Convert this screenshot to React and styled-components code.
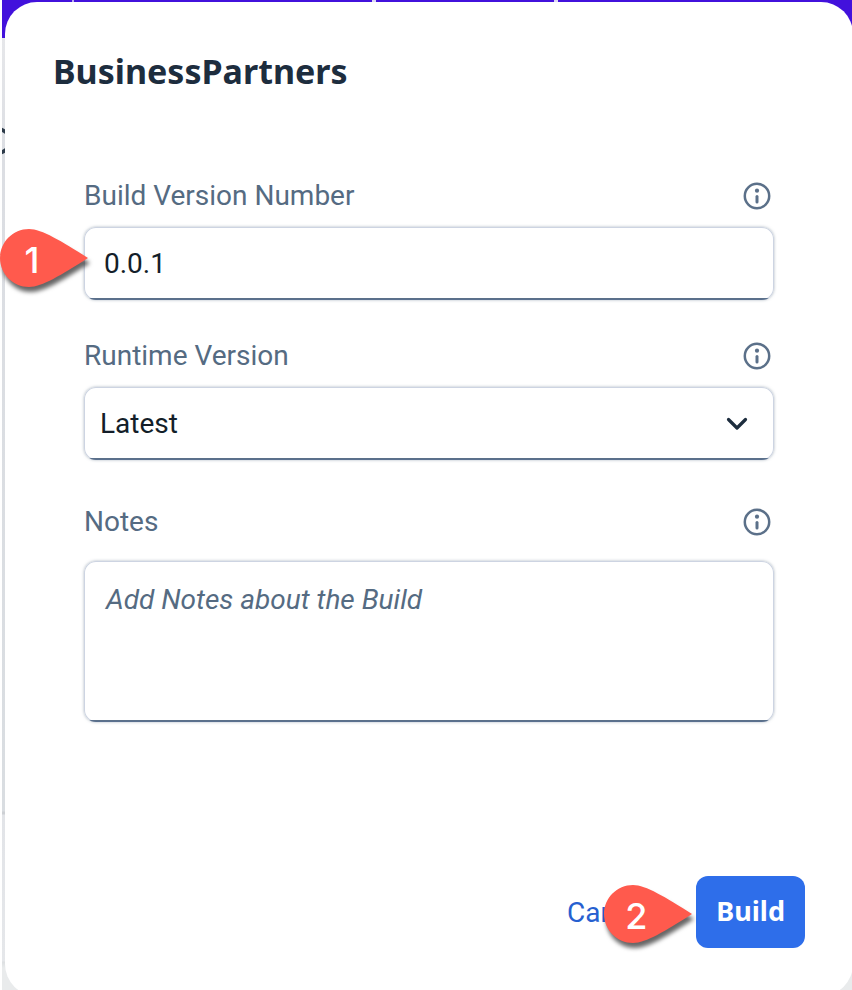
import React from "react";
import styled, { createGlobalStyle } from "styled-components";

const GlobalStyle = createGlobalStyle`
  *, *::before, *::after { box-sizing: border-box; }
  body {
    margin: 0;
    font-family: Roboto, sans-serif;
    font-size: 28px;
    color: #131e29;
  }
  button, input, select, textarea { font: inherit; color: inherit; }
`;

const Page = styled.div`
  position: relative;
  display: flex;
  min-height: 100vh;
  overflow: hidden;
  padding: 2px 0 0 5px;
  background:
    linear-gradient(#fff, #fff) 0 0 / 2px 100% no-repeat,
    linear-gradient(#dcd8f4, #dcd8f4) 372px 0 / 4px 2px no-repeat,
    linear-gradient(#dcd8f4, #dcd8f4) 554px 0 / 4px 2px no-repeat,
    linear-gradient(#b9aaf2, #b9aaf2) 72px 0 / 2px 2px no-repeat,
    linear-gradient(#4211dc, #4211dc) 0 0 / 100% 38px no-repeat,
    linear-gradient(
      #e6e7ea 38px, #dcdee3 150px, #d9dde1 811px, #cdd0d4 812px, #cdd0d4 814px,
      #e2e4e8 815px, #e5e7ea 961px, #dcdfe1 962px, #e9ebec 968px
    );
`;

const BackdropGlyph = styled.svg`
  position: absolute;
  left: 2px;
  top: 124px;
`;

const Dialog = styled.form`
  position: relative;
  display: flex;
  flex-direction: column;
  flex: 1;
  margin: 0 -1px -6px 0;
  padding: 48px;
  border-radius: 32px;
  background: #fff;
`;

const Title = styled.h1`
  margin: 0;
  font-family: "Noto Sans", sans-serif;
  font-size: 34px;
  font-weight: 700;
  line-height: 42px;
  color: #1d2d3e;
`;

const Fields = styled.div`
  display: flex;
  flex-direction: column;
  gap: 38px;
  margin-top: 86px;
  padding: 0 31px;
`;

const Field = styled.div`
  display: flex;
  flex-direction: column;
  gap: ${(p) => (p.$roomy ? 21 : 13)}px;
  padding-top: ${(p) => (p.$roomy ? 6 : 0)}px;
`;

const LabelRow = styled.div`
  display: flex;
  align-items: center;
  justify-content: space-between;
  height: 36px;
  padding: 0 3px 0 0;
`;

const Label = styled.label`
  line-height: 36px;
  color: #556b82;
`;

const InfoButton = styled.button`
  display: flex;
  padding: 0;
  border: 0;
  background: none;
  color: #5b7089;
`;

const ControlWrap = styled.div`
  position: relative;
  display: flex;
`;

const controlLook = `
  flex: 1;
  min-width: 0;
  margin: 0;
  border: 0;
  border-radius: 12px;
  outline: none;
  background: linear-gradient(#5b7089, #5b7089) 0 100% / 100% 2px no-repeat #fff;
  box-shadow:
    inset 0 0 0 1px rgba(91, 112, 160, 0.3),
    0 0 3px rgba(85, 107, 130, 0.5);
`;

const TextInput = styled.input`
  ${controlLook}
  height: 73px;
  padding: 0 20px;
`;

const Select = styled.select`
  ${controlLook}
  appearance: none;
  height: 73px;
  padding: 0 60px 0 16px;
`;

const TextArea = styled.textarea`
  ${controlLook}
  height: 161px;
  padding: 21px 22px;
  line-height: 36px;
  resize: none;
  &::placeholder {
    color: #556b82;
    font-style: italic;
    opacity: 1;
  }
`;

const Chevron = styled.svg`
  position: absolute;
  right: 26px;
  top: 27px;
  pointer-events: none;
`;

const Footer = styled.footer`
  display: flex;
  justify-content: flex-end;
  gap: 24px;
  margin-top: auto;
`;

const Button = styled.button`
  height: 72px;
  padding: 0 20px;
  border: 0;
  border-radius: 12px;
  color: #2660d0;
  background: transparent;
`;

const PrimaryButton = styled(Button)`
  padding-bottom: 3px;
  font-family: "Noto Sans", sans-serif;
  font-size: 27px;
  font-weight: 700;
  color: #fff;
  background: #2e6eea;
`;

const Anchor = styled.div`
  position: relative;
  display: flex;
`;

const MarkerBox = styled.div`
  position: absolute;
  top: ${(p) => p.$top}px;
  right: ${(p) => p.$right};
  width: 88px;
  height: 58px;
  pointer-events: none;
`;

const MarkerShape = styled.svg`
  display: block;
  overflow: visible;
  filter: drop-shadow(2px 5px 2px rgba(0, 0, 0, 0.6));
`;

const MarkerNumber = styled.span`
  position: absolute;
  left: 0;
  top: 2px;
  width: 64px;
  text-align: center;
  font: 500 36px/58px Inter, sans-serif;
  color: #fff;
`;

function Marker({ number, top, right }) {
  return (
    <MarkerBox $top={top} $right={right}>
      <MarkerShape width="88" height="58" viewBox="0 0 88 58" aria-hidden="true">
        <path
          d="M29 0C42 0 61 12 88 29C61 46 42 58 29 58C13 58 0 45 0 29C0 13 13 0 29 0Z"
          fill="#ff5a4d"
        />
      </MarkerShape>
      <MarkerNumber>{number}</MarkerNumber>
    </MarkerBox>
  );
}

function Info({ topic }) {
  return (
    <InfoButton type="button" aria-label={`About ${topic}`}>
      <svg width="28" height="28" viewBox="0 0 28 28" fill="none" aria-hidden="true">
        <circle cx="14" cy="14" r="12.2" stroke="currentColor" strokeWidth="2.5" />
        <circle cx="14" cy="8.7" r="2.1" fill="currentColor" />
        <path d="M14 14.5V20" stroke="currentColor" strokeWidth="3" strokeLinecap="round" />
      </svg>
    </InfoButton>
  );
}

function FieldHeader({ id, text }) {
  return (
    <LabelRow>
      <Label htmlFor={id}>{text}</Label>
      <Info topic={text} />
    </LabelRow>
  );
}

export default function App() {
  return (
    <>
      <GlobalStyle />
      <Page>
        <BackdropGlyph width="6" height="34" viewBox="0 0 6 34" fill="none" aria-hidden="true">
          <path d="M-2 5Q1 6 5 9M-2 29Q1 28 5 25" stroke="#2c3a49" strokeWidth="4" />
        </BackdropGlyph>
        <Dialog onSubmit={(e) => e.preventDefault()} aria-labelledby="dialog-title">
          <Title id="dialog-title">BusinessPartners</Title>
          <Fields>
            <Field>
              <FieldHeader id="build-version" text="Build Version Number" />
              <ControlWrap>
                <TextInput id="build-version" type="text" defaultValue="0.0.1" />
                <Marker number="1" top={2} right="calc(100% - 4px)" />
              </ControlWrap>
            </Field>
            <Field>
              <FieldHeader id="runtime-version" text="Runtime Version" />
              <ControlWrap>
                <Select id="runtime-version" defaultValue="latest">
                  <option value="latest">Latest</option>
                </Select>
                <Chevron width="22" height="20" viewBox="0 0 22 20" fill="none" aria-hidden="true">
                  <path
                    d="M2.5 5.5L11 14L19.5 5.5"
                    stroke="#1d2d3e"
                    strokeWidth="3.2"
                    strokeLinecap="round"
                    strokeLinejoin="round"
                  />
                </Chevron>
              </ControlWrap>
            </Field>
            <Field $roomy>
              <FieldHeader id="notes" text="Notes" />
              <ControlWrap>
                <TextArea id="notes" placeholder="Add Notes about the Build" />
              </ControlWrap>
            </Field>
          </Fields>
          <Footer>
            <Button type="button">Cancel</Button>
            <Anchor>
              <PrimaryButton type="submit">Build</PrimaryButton>
              <Marker number="2" top={9} right="calc(100% + 4px)" />
            </Anchor>
          </Footer>
        </Dialog>
      </Page>
    </>
  );
}
